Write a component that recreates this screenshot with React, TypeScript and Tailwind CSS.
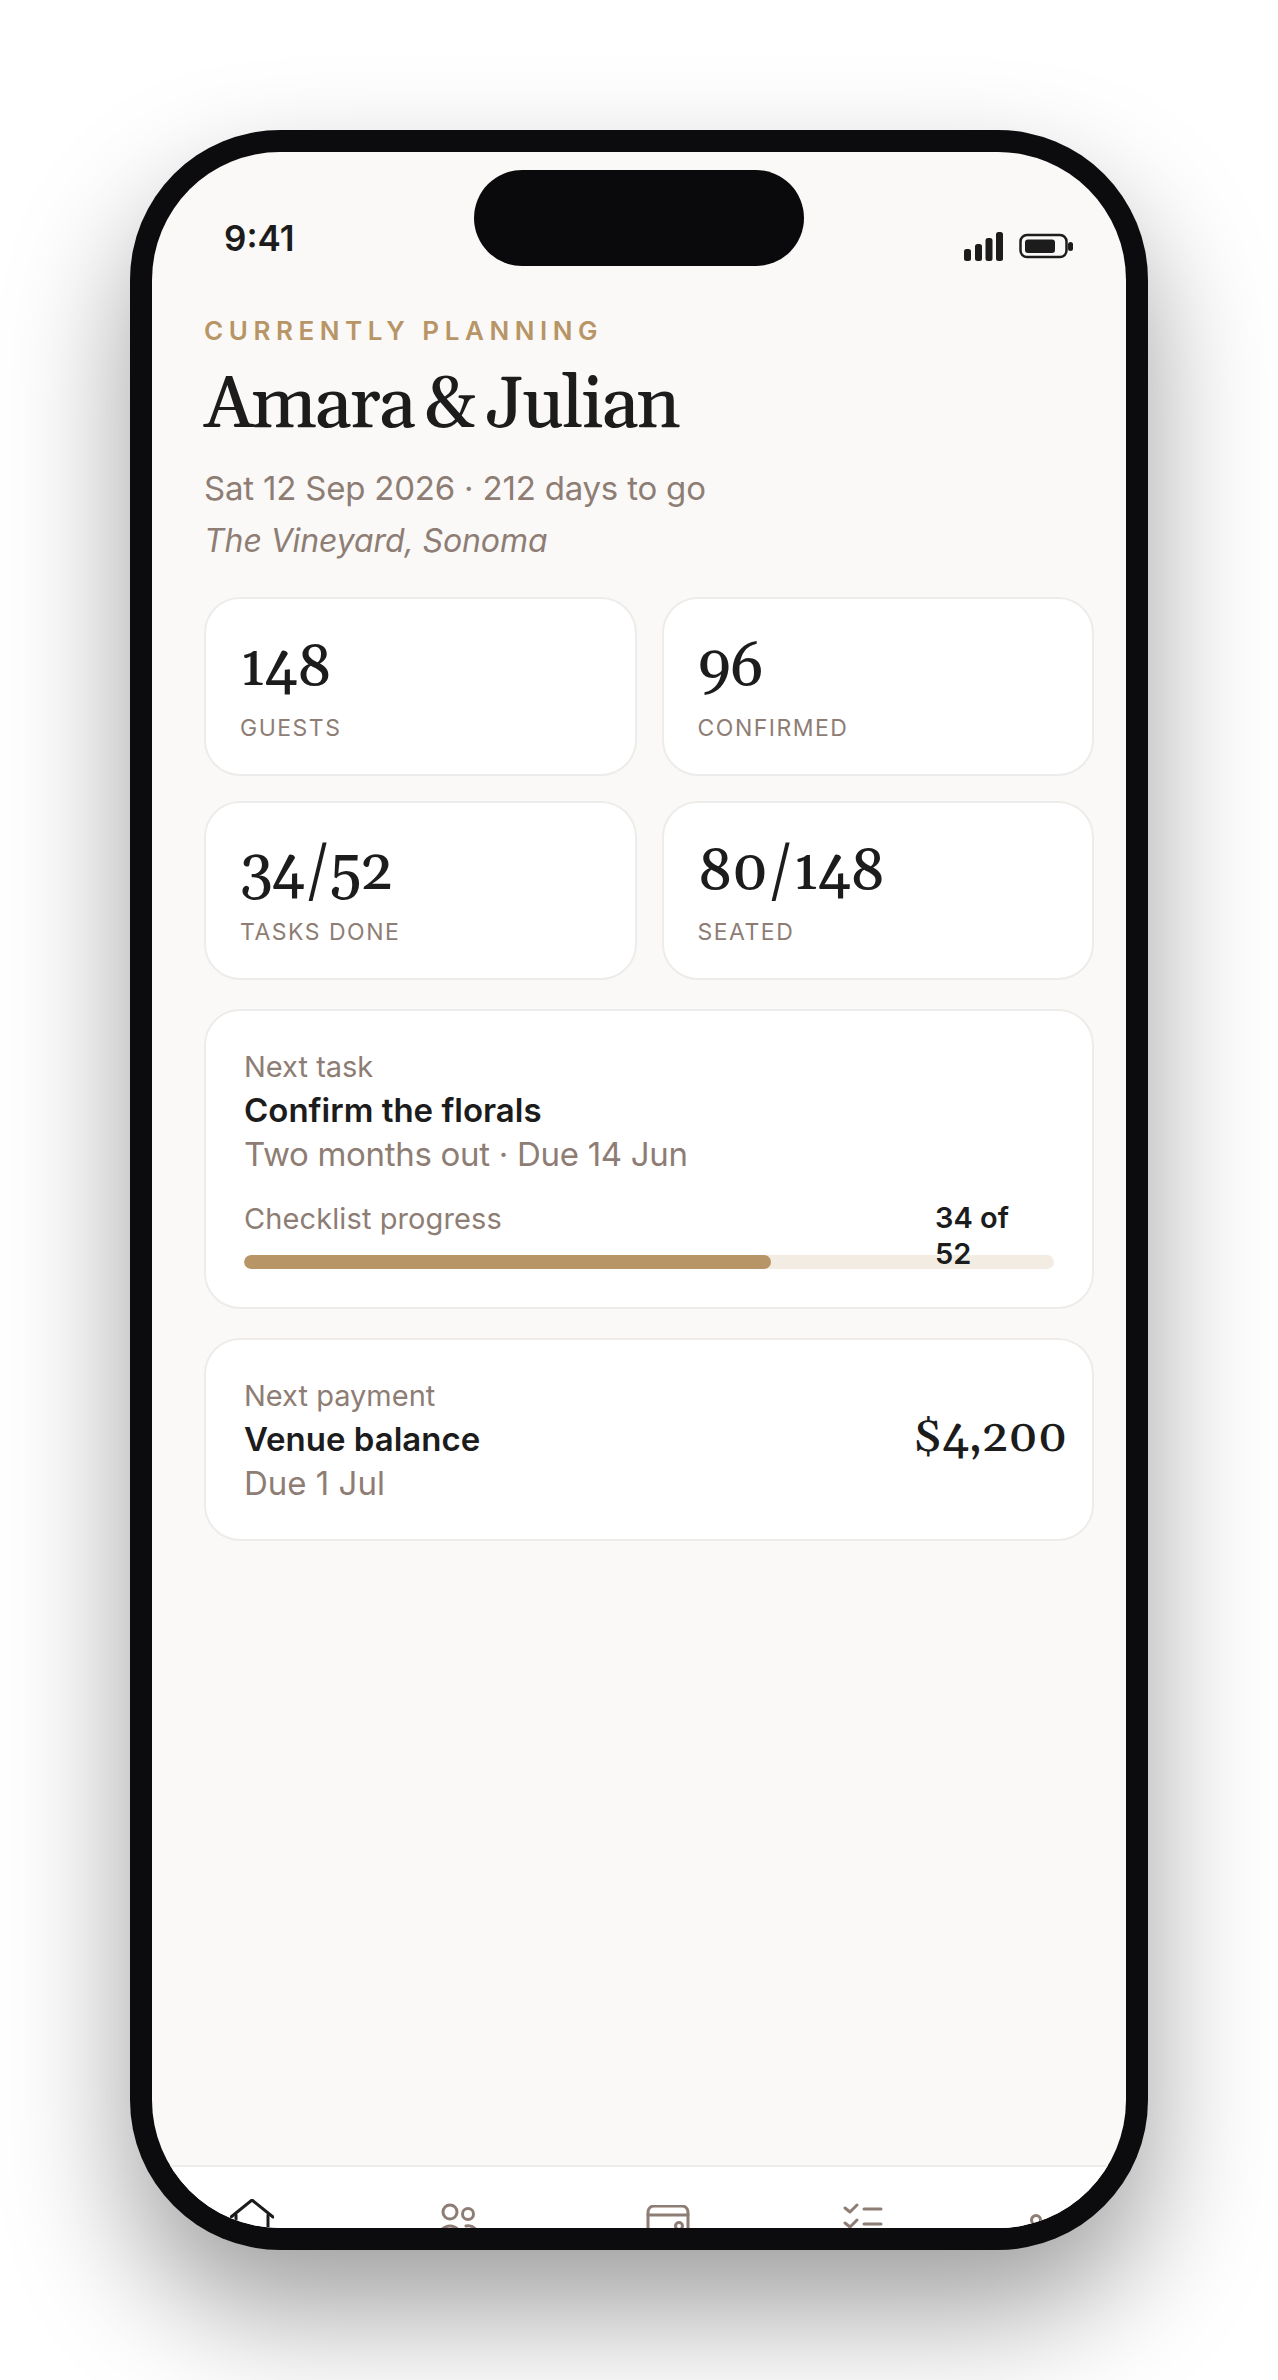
import React from 'react';

const serif = "font-['Georgia','Gelasio','Liberation_Serif',serif]";

const Stat = ({ value, label }: { value: string; label: string }) => (
    <div className="bg-white rounded-[36px] border-2 border-[#eeecea] h-[179px] px-[34px] pt-[32px]">
        <div className={`${serif} text-[58px] leading-[75px] tracking-[-1.2px] font-medium text-[#1c1c1c]`} style={{ fontVariantNumeric: 'oldstyle-nums' }}>{value}</div>
        <div className="mt-[7px] text-[23px] leading-[30px] tracking-[1.5px] text-[#8e7d74]">{label}</div>
    </div>
);

const StatusIcons = () => (
    <svg width="110" height="30" viewBox="0 0 110 30" className="text-[#1c1c1c]" fill="currentColor">
        <rect x="0" y="17" width="7" height="12" rx="2.5" />
        <rect x="11" y="12" width="7" height="17" rx="2.5" />
        <rect x="21.5" y="6" width="7" height="23" rx="2.5" />
        <rect x="32" y="0" width="7" height="29" rx="2.5" />
        <rect x="56.5" y="3" width="46" height="22" rx="6.5" fill="none" stroke="currentColor" strokeWidth="2.5" />
        <rect x="61" y="7.5" width="30" height="13.5" rx="3" />
        <rect x="104" y="10" width="5" height="9" rx="2.5" />
    </svg>
);

const navIcon = "shrink-0 text-[#8e7d74]";

export default function App() {
    return (
        <div className="h-[2380px] overflow-hidden bg-white flex justify-center pt-[130px] font-['Inter',sans-serif]">
            {/* Phone */}
            <div className="relative w-[1018px] h-[2120px] bg-[#0c0c0e] rounded-[150px] p-[22px] shadow-[0_62px_125px_rgba(0,0,0,0.38)]">
                <div className="absolute top-[40px] left-[344px] w-[330px] h-[96px] rounded-[48px] bg-[#0a0a0c] z-10" />
                <div className="h-full rounded-[128px] overflow-hidden bg-[#faf9f7] flex flex-col">
                    {/* Status bar */}
                    <div className="h-[164px] shrink-0 flex items-start justify-between pl-[72px] pr-[52px] pt-[65px]">
                        <span className="text-[35px] leading-[42px] font-semibold text-[#1c1c1c]">9:41</span>
                        <div className="pt-[15px]"><StatusIcons /></div>
                    </div>

                    <div className="flex-1 px-[52px]">
                        <div className="text-[26px] leading-[30px] font-semibold tracking-[5.55px] text-[#b89566]">CURRENTLY PLANNING</div>
                        <h1 className={`${serif} mt-[14px] text-[72px] leading-[92px] font-medium text-[#1c1c1c] tracking-[-2.2px] [word-spacing:-4.5px]`}>Amara &amp; Julian</h1>
                        <p className="mt-[10px] text-[33px] leading-[52px] tracking-[-0.2px] text-[#8e7d74]">Sat 12 Sep 2026 · 212 days to go</p>
                        <p className="mt-px text-[32px] leading-[52px] tracking-[-0.1px] italic text-[#8e7d74]">The Vineyard, Sonoma</p>

                        <div className="mt-[30px] grid grid-cols-2 gap-[25px] w-[890px]">
                            <Stat value="148" label="GUESTS" />
                            <Stat value="96" label="CONFIRMED" />
                            <Stat value="34/52" label="TASKS DONE" />
                            <Stat value="80/148" label="SEATED" />
                        </div>

                        <div className="mt-[29px] w-[890px] h-[300px] bg-white rounded-[36px] border-2 border-[#eeecea] px-[38px] pt-[34px]">
                            <div className="text-[29px] leading-[44px] text-[#8e7d74]">Next task</div>
                            <div className="-mt-px text-[33px] leading-[44px] font-semibold text-[#1c1c1c]">Confirm the florals</div>
                            <div className="text-[33px] leading-[44px] tracking-[-0.3px] text-[#8e7d74]">Two months out · Due 14 Jun</div>
                            <div className="mt-[21px] flex items-start justify-between h-[44px]">
                                <span className="text-[29px] leading-[44px] tracking-[0.1px] text-[#8e7d74]">Checklist progress</span>
                                <span className="w-[119px] pr-[20px] text-[29px] leading-[36px] font-semibold text-[#1c1c1c] relative z-[1] pt-[3px]">34 of 52</span>
                            </div>
                            <div className="mt-[14px] h-[14px] rounded-full bg-[#f3ece3] overflow-hidden">
                                <div className="h-full rounded-full bg-[#b89566]" style={{ width: '65%' }} />
                            </div>
                        </div>

                        <div className="mt-[29px] w-[890px] h-[203px] bg-white rounded-[36px] border-2 border-[#eeecea] pl-[38px] flex items-center">
                            <div className="flex-1 -mt-[1px]">
                                <div className="text-[29px] leading-[44px] text-[#8e7d74]">Next payment</div>
                                <div className="-mt-px text-[33px] leading-[44px] font-semibold text-[#1c1c1c]">Venue balance</div>
                                <div className="text-[33px] leading-[44px] text-[#8e7d74]">Due 1 Jul</div>
                            </div>
                            <div className={`${serif} mr-[25px] -mt-[5px] text-[47px] leading-[60px] tracking-[-0.3px] font-medium text-[#1c1c1c]`} style={{ fontVariantNumeric: 'oldstyle-nums' }}>$4,200</div>
                        </div>
                    </div>

                    {/* Tab bar, cut off by the phone frame */}
                    <div className="h-[63px] shrink-0 bg-white border-t-2 border-[#eeecea] flex items-start pt-[32px] pl-[78px]">
                        <svg width="44" height="44" viewBox="0 0 44 44" fill="none" stroke="#1c1c1c" strokeWidth="3" strokeLinecap="round" strokeLinejoin="round" className="shrink-0">
                            <path d="M1 18 22 1l21 17" />
                            <path d="M6 16v26h32V16" />
                        </svg>
                        <svg width="44" height="44" viewBox="0 0 44 44" fill="none" stroke="currentColor" strokeWidth="3" strokeLinecap="round" className={`${navIcon} ml-[162px] mt-[2px]`}>
                            <circle cx="14" cy="11" r="7" />
                            <circle cx="32" cy="13" r="5.5" />
                            <path d="M3 36a11 11 0 0 1 22 0" />
                            <path d="M30 25a9 9 0 0 1 11 11" />
                        </svg>
                        <svg width="44" height="44" viewBox="0 0 44 44" fill="none" stroke="currentColor" strokeWidth="3" strokeLinecap="round" className={`${navIcon} ml-[166px] mt-[6px]`}>
                            <rect x="2" y="1" width="40" height="36" rx="6" />
                            <path d="M2 10h40" />
                            <circle cx="33" cy="21" r="3.5" />
                        </svg>
                        <svg width="44" height="44" viewBox="0 0 44 44" fill="none" stroke="currentColor" strokeWidth="3" strokeLinecap="round" strokeLinejoin="round" className={`${navIcon} ml-[152px] mt-[4px]`}>
                            <path d="m3 5 5 4 7-7" />
                            <path d="M22 6h17" />
                            <path d="m3 20 5 4 7-7" />
                            <path d="M22 21h17" />
                            <path d="m3 35 5 4 7-7" />
                            <path d="M22 36h17" />
                        </svg>
                        <svg width="44" height="44" viewBox="0 0 44 44" fill="none" stroke="currentColor" strokeWidth="3" className={`${navIcon} ml-[128px] mt-[12px]`}>
                            <circle cx="22" cy="9" r="4.5" />
                            <path d="M10 36a12 12 0 0 1 24 0" />
                        </svg>
                    </div>
                </div>
            </div>
        </div>
    );
}
